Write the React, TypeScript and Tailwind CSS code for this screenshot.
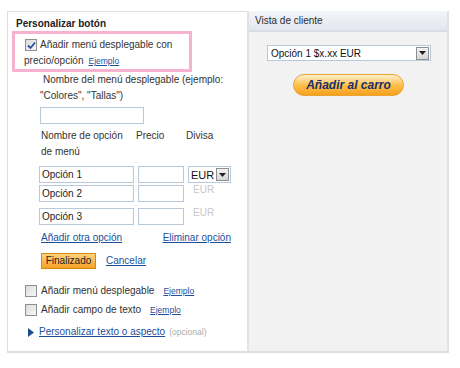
import React from 'react';

const font = { fontFamily: '"Liberation Sans", Arial, sans-serif' };

// Small checkbox drawn like the old Windows style
const Box = ({ checked }: { checked?: boolean }) => (
  <span className="inline-flex h-[12px] w-[12px] shrink-0 items-center justify-center border border-[#8f8f8f] bg-gradient-to-br from-[#dcdcdc] to-[#f7f7f7]">
    {checked && (
      <svg width="9" height="9" viewBox="0 0 9 9">
        <path d="M1 4.5 L3.5 7 L8 1.5" fill="none" stroke="#2a4f9e" strokeWidth="1.8" />
      </svg>
    )}
  </span>
);

const Arrow = () => (
  <span className="flex h-[13px] w-[13px] items-center justify-center border border-[#8e8e8e] bg-gradient-to-b from-[#f4f4f4] to-[#d6d6d6]">
    <svg width="7" height="4" viewBox="0 0 7 4">
      <path d="M0 0 H7 L3.5 4 Z" fill="#222" />
    </svg>
  </span>
);

const Input = ({ value, className }: { value?: string; className: string }) => (
  <div className={`flex h-[17px] items-center border border-[#b9c9dc] bg-white px-[2px] text-[10px] text-[#222] ${className}`}>
    {value}
  </div>
);

const Ejemplo = () => (
  <span className="ml-[5px] text-[8.5px] text-[#1b4f9a] underline">Ejemplo</span>
);

export default function App() {
  return (
    <div className="h-[368px] w-[460px] bg-white pl-[7px] pt-[11px] text-[10px] text-[#333]" style={font}>
      <div className="flex h-[342px] w-[442px] border-b-2 border-l border-[#dedede]">
        {/* left column */}
        <div className="w-[239px] border-t border-[#dedede] pl-[4px]">
          <div className="mt-[5px] pl-[4px] text-[10px] font-bold leading-[14px] text-[#222]">Personalizar botón</div>
          <div className="h-[41px] w-[180px] border-[3px] border-[#f7b2cf] pl-[10px] pt-[3px]">
            <div className="flex items-center gap-[3px] leading-[16px]">
              <Box checked />
              <span>Añadir menú desplegable con</span>
            </div>
            <div className="-ml-[1px] leading-[16px]">
              precio/opción
              <Ejemplo />
            </div>
          </div>
          <div className="ml-[28px] leading-[16px]">
            <div className="pl-[3px]">Nombre del menú desplegable (ejemplo:</div>
            <div>"Colores", "Tallas")</div>
            <Input className="mt-[3px] w-[104px]" />
            <div className="mt-[4px] flex">
              <div className="w-[96px] pl-[1px]">
                Nombre de opción
                <br />
                de menú
              </div>
              <div className="w-[50px]">Precio</div>
              <div>Divisa</div>
            </div>
            <div className="mt-[6px] flex items-start -ml-[1px]">
              <Input value="Opción 1" className="w-[95px]" />
              <Input className="ml-[4px] w-[46px]" />
              <div className="ml-[4px] flex h-[17px] w-[43px] items-center justify-between border border-[#b9c9dc] bg-white pl-[2px] pr-[1px] text-[11px] text-[#111]">
                EUR
                <Arrow />
              </div>
            </div>
            <div className="mt-[2px] flex items-start -ml-[1px]">
              <Input value="Opción 2" className="w-[95px]" />
              <Input className="ml-[4px] w-[46px]" />
              <div className="ml-[9px] -mt-[2px] leading-[14px] text-[#c8c8c8]">EUR</div>
            </div>
            <div className="mt-[6px] flex items-start -ml-[1px]">
              <Input value="Opción 3" className="w-[95px]" />
              <Input className="ml-[4px] w-[46px]" />
              <div className="ml-[9px] -mt-[2px] leading-[14px] text-[#c8c8c8]">EUR</div>
            </div>
            <div className="mt-[5px] flex w-[191px] justify-between text-[#1b4f9a] underline">
              <span className="pl-[1px]">Añadir otra opción</span>
              <span>Eliminar opción</span>
            </div>
            <div className="mt-[7px] flex items-center">
              <div className="ml-[1px] flex h-[16px] w-[55px] items-center justify-center border border-[#d78a16] bg-gradient-to-b from-[#ffd27a] to-[#f7a21c] text-[10px] text-[#222]">
                Finalizado
              </div>
              <span className="ml-[10px] text-[#1b4f9a] underline">Cancelar</span>
            </div>
          </div>
          <div className="ml-[13px] mt-[14px] flex items-center gap-[4px] leading-[16px]">
            <Box />
            <span>Añadir menú desplegable</span>
            <Ejemplo />
          </div>
          <div className="ml-[13px] mt-[3px] flex items-center gap-[4px] leading-[16px]">
            <Box />
            <span>Añadir campo de texto</span>
            <Ejemplo />
          </div>
          <div className="ml-[16px] mt-[6px] flex items-center leading-[16px]">
            <svg width="6" height="9" viewBox="0 0 6 9" className="mr-[5px]">
              <path d="M0 0 L6 4.5 L0 9 Z" fill="#1d4f8f" />
            </svg>
            <span className="text-[#1b4f9a] underline">Personalizar texto o aspecto</span>
            <span className="ml-[4px] text-[8.5px] text-[#aaa]">(opcional)</span>
          </div>
        </div>
        {/* right column */}
        <div className="flex w-[202px] flex-col border-x-2 border-[#e2e2e2] bg-[#f2f2f2]">
          <div className="flex h-[21px] items-center border-b-2 border-[#d8dde5] bg-gradient-to-b from-[#f3f5f8] to-[#e3e7ee] pl-[6px] text-[#2b2b2b]">
            Vista de cliente
          </div>
          <div className="ml-[18px] mt-[13px] flex h-[16px] w-[164px] items-center justify-between border border-[#b9c9dc] bg-white pl-[3px] pr-[1px] text-[#111]">
            Opción 1 $x.xx EUR
            <Arrow />
          </div>
          <div className="ml-[44px] mt-[13px] flex h-[22px] w-[111px] items-center justify-center rounded-full border border-[#e8a33a] bg-gradient-to-b from-[#fff0c8] via-[#ffc04a] to-[#f5a11a] text-[12px] font-bold italic text-[#16306b]">
            Añadir al carro
          </div>
        </div>
      </div>
    </div>
  );
}
